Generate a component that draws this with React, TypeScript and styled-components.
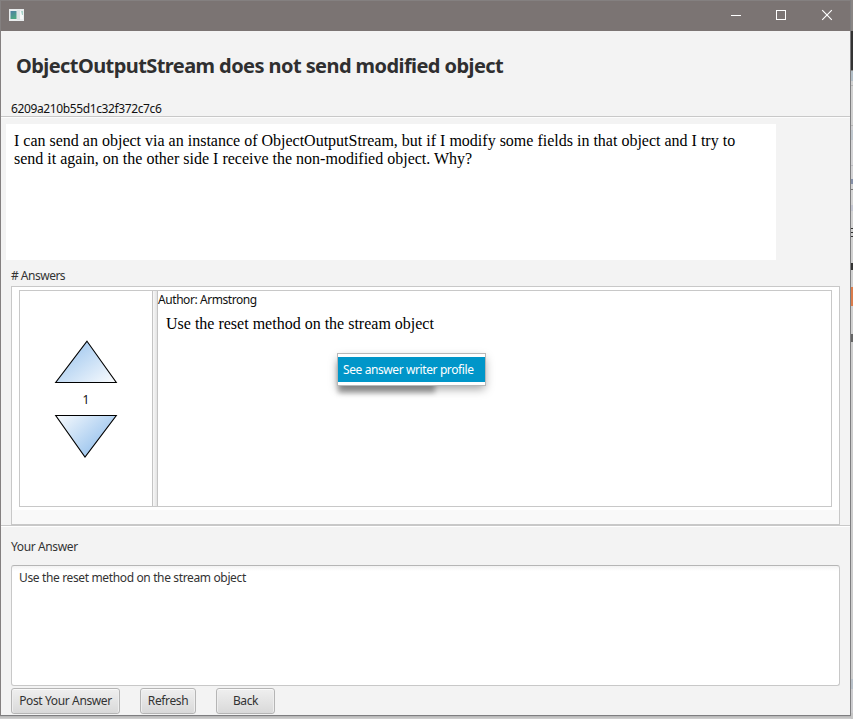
import React from "react";
import styled, { createGlobalStyle } from "styled-components";

const GlobalStyle = createGlobalStyle`
  * { box-sizing: border-box; }
  html, body { margin: 0; padding: 0; overflow: hidden; }
  body { background: #cfcfcf; }
`;

const Desktop = styled.div`
  display: flex;
  width: 853px;
  height: 719px;
  background: linear-gradient(to bottom, #cfcfcf 716px, #b4b4b4 716px, #d2d2d2 719px);
  font-family: "Noto Sans", "Open Sans", sans-serif;
`;

const Window = styled.div`
  display: flex;
  flex-direction: column;
  width: 851px;
  height: 716px;
  border: 1px solid #848080;
  border-right-color: #7e7e80;
  border-bottom-color: #7e7e80;
  background: #f3f3f3;
`;

const TitleBar = styled.header`
  display: flex;
  align-items: center;
  justify-content: space-between;
  flex: none;
  height: 30px;
  padding: 0 17px 2px 8px;
  background: #7b7473;
`;

const WindowButtons = styled.div`
  display: flex;
  gap: 34px;
  svg { display: block; }
`;

const Header = styled.section`
  display: flex;
  flex-direction: column;
  flex: none;
  height: 87px;
  padding: 21px 10px 0 10px;
  border-bottom: 1px solid #fcfcfc;
  box-shadow: inset 0 -1px #c8c8c8;
`;

const Text = styled.span<{ $space?: number; $color?: string }>`
  display: block;
  flex: none;
  font-size: 12px;
  line-height: 16px;
  letter-spacing: ${(p) => p.$space ?? 0}px;
  color: ${(p) => p.$color ?? "#333"};
  white-space: nowrap;
`;

const Title = styled.h1`
  flex: none;
  margin: 0 0 21px 5px;
  font-size: 20px;
  line-height: 28px;
  font-weight: 700;
  letter-spacing: -0.575px;
  color: #2f2f30;
  white-space: nowrap;
`;

const Question = styled.section`
  flex: none;
  display: flex;
  flex-direction: column;
  height: 409px;
  padding: 6px 10px 0 5px;
  border-bottom: 1px solid #fff;
  box-shadow: inset 0 -1px #c8c8c8;
`;

const Html = styled.p`
  margin: 0;
  font-family: "Liberation Serif", serif;
  font-size: 16px;
  line-height: 18px;
  color: #000;
  white-space: nowrap;
`;

const QuestionBody = styled.div`
  flex: none;
  width: 770px;
  height: 136px;
  padding: 8px;
  background: #fff;
`;

const AnswersLabel = styled.div`
  height: 26px;
  flex: none;
  padding: 8px 0 0 5px;
`;

const AnswerList = styled.div`
  flex: none;
  height: 239px;
  margin-left: 5px;
  padding: 3px 7px 0;
  border: 1px solid #c8c8c8;
  background: linear-gradient(to bottom, #fff 223px, #f9f9f9 223px);
`;

const SplitPane = styled.div`
  display: flex;
  height: 217px;
  border: 1px solid #c8c8c8;
  background: #fff;
`;

const Votes = styled.div`
  display: flex;
  flex-direction: column;
  align-items: center;
  flex: none;
  width: 132px;
  padding-top: 48px;
  svg { display: block; }
`;

const VoteCount = styled(Text)`
  height: 23px;
  padding-top: 7px;
`;

const Divider = styled.div`
  flex: none;
  width: 6px;
  border: solid #c4c4c4;
  border-width: 0 1px;
  background: linear-gradient(to right, #f8f8f8, #e3e3e3);
`;

const AnswerBody = styled.div`
  position: relative;
  z-index: 0;
  flex: 1;
  padding: 1px 0 0;
  p { margin: 7px 0 0 8px; }
`;

const Popup = styled.div`
  position: absolute;
  left: 179px;
  top: 62px;
  width: 149px;
  height: 33px;
  padding: 3px 0;
  border: 1px solid #b8b8b8;
  background: #fff;
  box-shadow: 0 4px 9px -1px rgba(0, 0, 0, 0.36);
  &::before {
    content: "";
    position: absolute;
    z-index: -1;
    left: 0;
    top: 10px;
    width: 97px;
    height: 29px;
    background: rgba(0, 0, 0, 0.3);
    filter: blur(2.5px);
  }
`;

const PopupItem = styled.div`
  height: 25px;
  padding: 5px 5px;
  background: #0096c9;
`;

const Footer = styled.section`
  display: flex;
  flex-direction: column;
  flex: 1;
  padding: 12px 10px 1px;
`;

const AnswerInput = styled.div`
  flex: none;
  height: 121px;
  margin: 10px 0 2px;
  padding: 4px 7px;
  border: 1px solid #c8c8c8;
  border-top-color: #b5b5b5;
  border-radius: 3px;
  background: linear-gradient(to bottom, #f2f2f2, #fff 5px);
`;

const ButtonRow = styled.div`
  display: flex;
  gap: 20px;
`;

const Button = styled.button<{ $width: number }>`
  width: ${(p) => p.$width}px;
  height: 26px;
  margin: 0;
  padding: 0;
  border: 1px solid #b5b5b5;
  border-radius: 3px;
  background: linear-gradient(to bottom, #efefef, #d9d9d9);
  box-shadow: inset 0 1px #fafafa, inset 1px 0 #eeeeee, inset -1px 0 #eeeeee;
  font-family: inherit;
  font-size: 12px;
  line-height: 16px;
  letter-spacing: -0.37px;
  color: #333;
  white-space: nowrap;
`;

const Backdrop = styled.div`
  width: 2px;
  height: 719px;
`;

const Slice = styled.div<{ $h: number; $c: string }>`
  height: ${(p) => p.$h}px;
  background: ${(p) => p.$c};
`;

const slices: [number, string][] = [
  [31, "#8a8685"], [39, "#333333"], [1, "#858585"], [10, "#b2bec7"], [4, "#d0d0d0"],
  [1, "#b5b5b5"], [39, "#d0d0d0"], [1, "#b5b5b5"], [4, "#cfcfd2"], [10, "#bfc7ce"],
  [25, "#d3d3d5"], [1, "#bbbbc0"], [13, "#d3d3d5"], [5, "#8590a8"], [5, "#d2d2d2"],
  [1, "#777777"], [15, "#d4d4d4"], [6, "#c3c5d0"], [17, "#d2d2d2"], [1, "#303030"],
  [3, "#d0d0d0"], [1, "#303030"], [3, "#d0d0d0"], [1, "#303030"], [26, "#d0d0d0"],
  [7, "#333333"], [17, "#d0d0d0"], [19, "#db7c4b"], [28, "#d0d0d0"], [8, "#666666"],
  [337, "#cdcdcd"], [10, "#b8c0c8"], [24, "#cccccf"], [6, "#c6c6c6"],
];

const AppIcon = () => (
  <svg width="15" height="12" viewBox="0 0 15 12">
    <defs>
      <linearGradient id="screen" x1="0" y1="0" x2="0.4" y2="1">
        <stop offset="0" stopColor="#4d7fa5" />
        <stop offset="1" stopColor="#4da783" />
      </linearGradient>
    </defs>
    <rect width="15" height="12" fill="#e9eced" />
    <rect x="1.5" y="2" width="6" height="8" fill="url(#screen)" />
    <rect x="8" y="1" width="3" height="10" fill="#dce3e4" />
    <rect x="11" y="2" width="3" height="8" fill="#f5f8f8" />
    <path d="M12 2h2v4h-1z" fill="#a6d2c8" />
  </svg>
);

export default function App() {
  return (
    <>
      <GlobalStyle />
      <Desktop>
        <Window>
          <TitleBar>
            <AppIcon />
            <WindowButtons>
              <svg width="12" height="12" shapeRendering="crispEdges">
                <path d="M2 6.5h10" stroke="#fff" />
              </svg>
              <svg width="12" height="12" shapeRendering="crispEdges">
                <rect x="1.5" y="1.5" width="9" height="9" fill="none" stroke="#fff" />
              </svg>
              <svg width="12" height="12">
                <path d="M1.2 1.2L10.8 10.8M10.8 1.2L1.2 10.8" stroke="#fff" strokeWidth="1.15" />
              </svg>
            </WindowButtons>
          </TitleBar>
          <Header>
            <Title>ObjectOutputStream does not send modified object</Title>
            <Text $space={-0.38} $color="#111">6209a210b55d1c32f372c7c6</Text>
          </Header>
          <Question>
            <QuestionBody>
              <Html>
                I can send an object via an instance of ObjectOutputStream, but if I modify some fields in that object and I try to
                <br />
                send it again, on the other side I receive the non-modified object. Why?
              </Html>
            </QuestionBody>
            <AnswersLabel>
              <Text $space={-0.5}># Answers</Text>
            </AnswersLabel>
            <AnswerList>
              <SplitPane>
                <Votes>
                  <svg width="64" height="46">
                    <defs>
                      <linearGradient id="up" x1="0.15" y1="0.3" x2="0.9" y2="1">
                        <stop offset="0" stopColor="#a8ccf0" />
                        <stop offset="1" stopColor="#f5f9fd" />
                      </linearGradient>
                    </defs>
                    <path d="M33 2.2L62.3 43.5H1.7Z" fill="url(#up)" stroke="#000" strokeWidth="1.1" />
                  </svg>
                  <VoteCount $color="#111">1</VoteCount>
                  <svg width="64" height="52">
                    <defs>
                      <linearGradient id="down" x1="0.05" y1="0" x2="0.75" y2="0.55">
                        <stop offset="0" stopColor="#f5f9fd" />
                        <stop offset="1" stopColor="#a8ccf0" />
                      </linearGradient>
                    </defs>
                    <path d="M1.7 7.5H62.3L31 49Z" fill="url(#down)" stroke="#000" strokeWidth="1.1" />
                  </svg>
                </Votes>
                <Divider />
                <AnswerBody>
                  <Text $space={-0.43} $color="#111">Author: Armstrong</Text>
                  <Html>Use the reset method on the stream object</Html>
                  <Popup>
                    <PopupItem>
                      <Text $space={-0.4} $color="#fff">See answer writer profile</Text>
                    </PopupItem>
                  </Popup>
                </AnswerBody>
              </SplitPane>
            </AnswerList>
          </Question>
          <Footer>
            <Text $space={-0.38}>Your Answer</Text>
            <AnswerInput>
              <Text $space={-0.36}>Use the reset method on the stream object</Text>
            </AnswerInput>
            <ButtonRow>
              <Button $width={109}>Post Your Answer</Button>
              <Button $width={56}>Refresh</Button>
              <Button $width={59}>Back</Button>
            </ButtonRow>
          </Footer>
        </Window>
        <Backdrop>
          {slices.map(([h, c], i) => (
            <Slice key={i} $h={h} $c={c} />
          ))}
        </Backdrop>
      </Desktop>
    </>
  );
}
